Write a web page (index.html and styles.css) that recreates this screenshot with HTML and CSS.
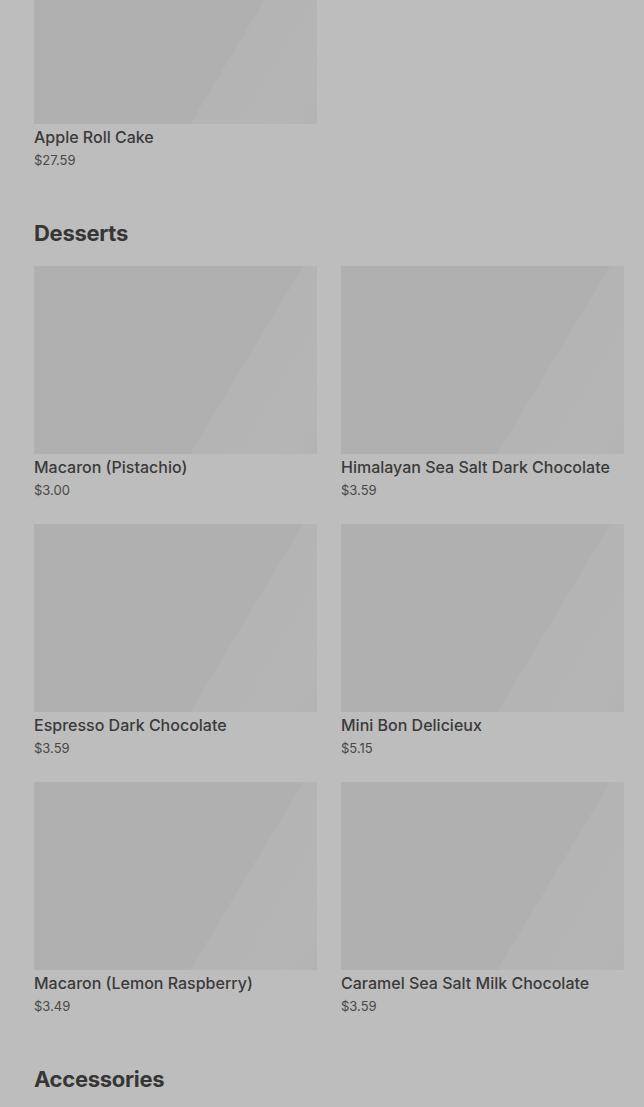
FILE: index.html
```html
<!DOCTYPE html>
<html lang="en">
<head>
    <meta charset="UTF-8">
    <meta name="viewport" content="width=device-width, initial-scale=1.0">
    <title>Menu</title>
    <link rel="stylesheet" href="styles.css">
</head>
<body>
    <div class="menu">
        <section class="section section-first">
            <div class="grid">
                <div class="item">
                    <div class="thumb"></div>
                    <p class="name">Apple Roll Cake</p>
                    <p class="price">$27.59</p>
                </div>
            </div>
        </section>

        <section class="section">
            <h2 class="section-title">Desserts</h2>
            <div class="grid">
                <div class="item">
                    <div class="thumb"></div>
                    <p class="name">Macaron (Pistachio)</p>
                    <p class="price">$3.00</p>
                </div>
                <div class="item">
                    <div class="thumb"></div>
                    <p class="name">Himalayan Sea Salt Dark Chocolate</p>
                    <p class="price">$3.59</p>
                </div>
                <div class="item">
                    <div class="thumb"></div>
                    <p class="name">Espresso Dark Chocolate</p>
                    <p class="price">$3.59</p>
                </div>
                <div class="item">
                    <div class="thumb"></div>
                    <p class="name">Mini Bon Delicieux</p>
                    <p class="price">$5.15</p>
                </div>
                <div class="item">
                    <div class="thumb"></div>
                    <p class="name">Macaron (Lemon Raspberry)</p>
                    <p class="price">$3.49</p>
                </div>
                <div class="item">
                    <div class="thumb"></div>
                    <p class="name">Caramel Sea Salt Milk Chocolate</p>
                    <p class="price">$3.59</p>
                </div>
            </div>
        </section>

        <section class="section">
            <h2 class="section-title">Accessories</h2>
        </section>
    </div>
</body>
</html>
```

FILE: styles.css
```css
body {
    margin: 0;
    padding: 0;
    background-color: #bdbdbd;
    font-family: Inter, "Noto Sans", Arial, sans-serif;
    color: #3a3a3a;
    overflow: hidden;
}

.menu {
    padding: 0 20px 0 34px;
}

.section-first {
    margin-top: -64px;
}

.section {
    margin-bottom: 48px;
}

.section-title {
    margin: 0 0 17px;
    font-size: 22px;
    line-height: 32px;
    font-weight: 700;
    letter-spacing: -0.3px;
    color: #363636;
}

.grid {
    display: grid;
    grid-template-columns: 283px 283px;
    column-gap: 24px;
    row-gap: 25px;
}

.thumb {
    height: 188px;
    background: linear-gradient(121deg, #b0b0b0 0%, #b0b0b0 68%, #b4b4b4 68%, #b5b5b5 93%, #b3b3b3 100%);
}

.name {
    margin: 3px 0 0;
    font-size: 16px;
    line-height: 20px;
    font-weight: 500;
    color: #3a3a3a;
}

.price {
    margin: 4px 0 0;
    font-size: 13px;
    line-height: 18px;
    color: #484848;
}
```
